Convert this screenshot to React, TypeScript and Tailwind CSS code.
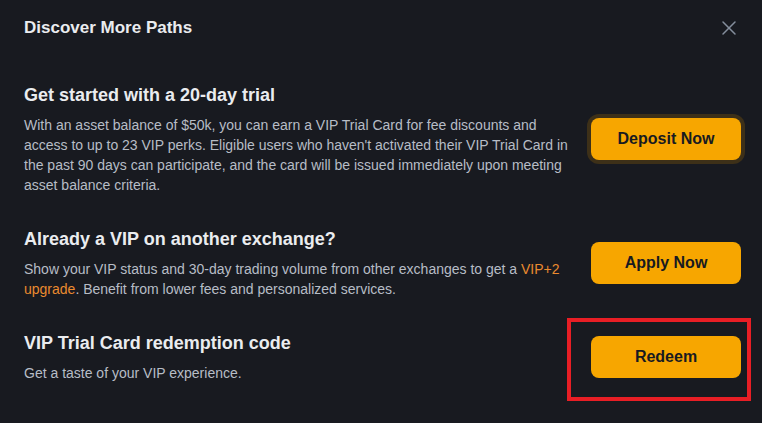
import { X } from "lucide-react";

const paths = [
  {
    title: "Get started with a 20-day trial",
    body: (
      <>
        With an asset balance of $50k, you can earn a VIP Trial Card for fee discounts and access to up to 23 VIP
        perks. Eligible users who haven't activated their VIP Trial Card in the past 90 days can participate, and the
        card will be issued immediately upon meeting asset balance criteria.
      </>
    ),
    action: "Deposit Now",
    focused: true,
  },
  {
    title: "Already a VIP on another exchange?",
    body: (
      <>
        Show your VIP status and 30-day trading volume from other exchanges to get a{" "}
        <span className="text-[#ea8a2f]">VIP+2 upgrade</span>. Benefit from lower fees and personalized services.
      </>
    ),
    action: "Apply Now",
  },
  {
    title: "VIP Trial Card redemption code",
    body: <>Get a taste of your VIP experience.</>,
    action: "Redeem",
    marked: true,
  },
];

export default function App() {
  return (
    <div
      className="w-[762px] h-[423px] overflow-hidden bg-[#181a20] text-white pl-6 pr-[21px] pt-4"
      style={{ fontFamily: '"Liberation Sans", Arial, sans-serif' }}
    >
      <div className="flex items-center justify-between h-6">
        <h2 className="text-[17px] font-bold leading-6 text-[#eaecef]">Discover More Paths</h2>
        <button className="text-[#848e9c]">
          <X size={24} strokeWidth={1.5} />
        </button>
      </div>

      <div className="mt-[43px] flex flex-col gap-8">
        {paths.map((p) => (
          <div key={p.title} className="flex items-center justify-between gap-5">
            <div className="w-[547px]">
              <h3 className="text-[18px] font-bold leading-6 text-[#eaecef]">{p.title}</h3>
              <p className="mt-2 text-[14px] leading-5 text-[#b7bdc6]">{p.body}</p>
            </div>
            <div className="relative shrink-0">
              <button
                className={
                  "w-[150px] h-[42px] rounded-lg bg-[#f7a600] text-[#181a20] text-[16px] font-bold " +
                  (p.focused ? "ring-4 ring-[#3d3018]" : "")
                }
              >
                {p.action}
              </button>
              {p.marked && (
                <div className="absolute -left-[24px] -right-[10px] -top-[18px] -bottom-[23px] border-4 border-[#e81e25] pointer-events-none" />
              )}
            </div>
          </div>
        ))}
      </div>
    </div>
  );
}
